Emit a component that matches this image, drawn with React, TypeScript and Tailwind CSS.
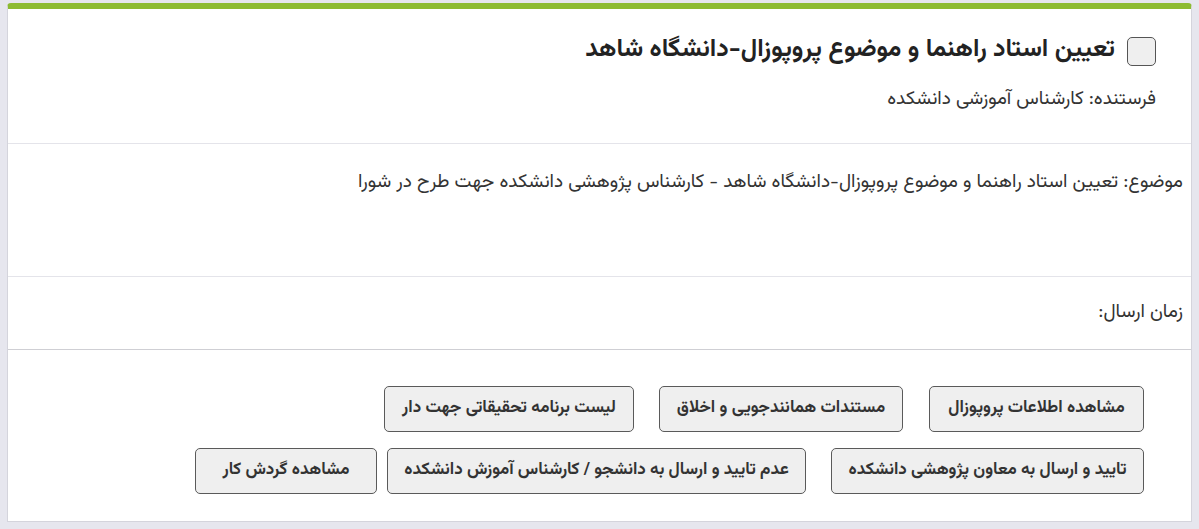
import React from 'react';

const rowOne = [
  { label: 'مشاهده اطلاعات پروپوزال', w: 'w-[215px]', gap: '' },
  { label: 'مستندات همانندجویی و اخلاق', w: 'w-[244px]', gap: 'mr-[26px]' },
  { label: 'لیست برنامه تحقیقاتی جهت دار', w: 'w-[250px]', gap: 'mr-[25px]' },
];

const rowTwo = [
  { label: 'تایید و ارسال به معاون پژوهشی دانشکده', w: 'w-[313px]', gap: '' },
  { label: 'عدم تایید و ارسال به دانشجو / کارشناس آموزش دانشکده', w: 'w-[419px]', gap: 'mr-[25px]' },
  { label: 'مشاهده گردش کار', w: 'w-[182px]', gap: 'mr-[10px]' },
];

const ActionButton: React.FC<{ label: string; className: string }> = ({ label, className }) => (
  <button
    className={`h-[46px] rounded-[5px] border border-[#5a5a5a] bg-[#efefef] text-[17px] font-bold text-[#333] ${className}`}
  >
    {label}
  </button>
);

const App: React.FC = () => {
  return (
    <div
      dir="rtl"
      className="min-h-[529px] w-full bg-[#e6e6ee] pt-[3px] pr-[7px] pl-[7px] pb-[7px]"
      style={{ fontFamily: '"Vazirmatn", "Noto Sans Arabic", "DejaVu Sans", sans-serif' }}
    >
      <div className="h-[519px] rounded-t-[4px] border-x border-b border-[#d4d4dc] border-t-[6px] border-t-[#8dbb33] bg-white">
        {/* Header */}
        <div className="h-[135px] border-b border-[#e4e4ea] pt-[28px] pr-[35px]">
          <div className="flex h-[29px] items-center gap-[12px]">
            <div className="h-[29px] w-[29px] shrink-0 rounded-[5px] border border-[#555] bg-[#efefef]" />
            <h1 className="-mt-[4px] text-[25px] font-bold leading-none text-[#222]">
              تعیین استاد راهنما و موضوع پروپوزال-دانشگاه شاهد
            </h1>
          </div>
          <p className="mt-[22px] text-[19px] leading-6 text-[#333]">فرستنده: کارشناس آموزشی دانشکده</p>
        </div>

        {/* Subject */}
        <div className="h-[133px] border-b border-[#e4e4ea] pt-[27px] pr-[8px]">
          <p className="text-[19px] leading-6 text-[#333]">
            موضوع: تعیین استاد راهنما و موضوع پروپوزال-دانشگاه شاهد - کارشناس پژوهشی دانشکده جهت طرح در شورا
          </p>
        </div>

        {/* Sent time */}
        <div className="h-[73px] border-b border-[#cfcfd4] pt-[24px] pr-[8px]">
          <p className="text-[19px] leading-6 text-[#333]">زمان ارسال:</p>
        </div>

        {/* Actions */}
        <div className="flex flex-col gap-[16px] pt-[36px] pr-[47px]">
          <div className="flex">
            {rowOne.map((b) => (
              <ActionButton key={b.label} label={b.label} className={`${b.w} ${b.gap}`} />
            ))}
          </div>
          <div className="flex">
            {rowTwo.map((b) => (
              <ActionButton key={b.label} label={b.label} className={`${b.w} ${b.gap}`} />
            ))}
          </div>
        </div>
      </div>
    </div>
  );
};

export default App;
